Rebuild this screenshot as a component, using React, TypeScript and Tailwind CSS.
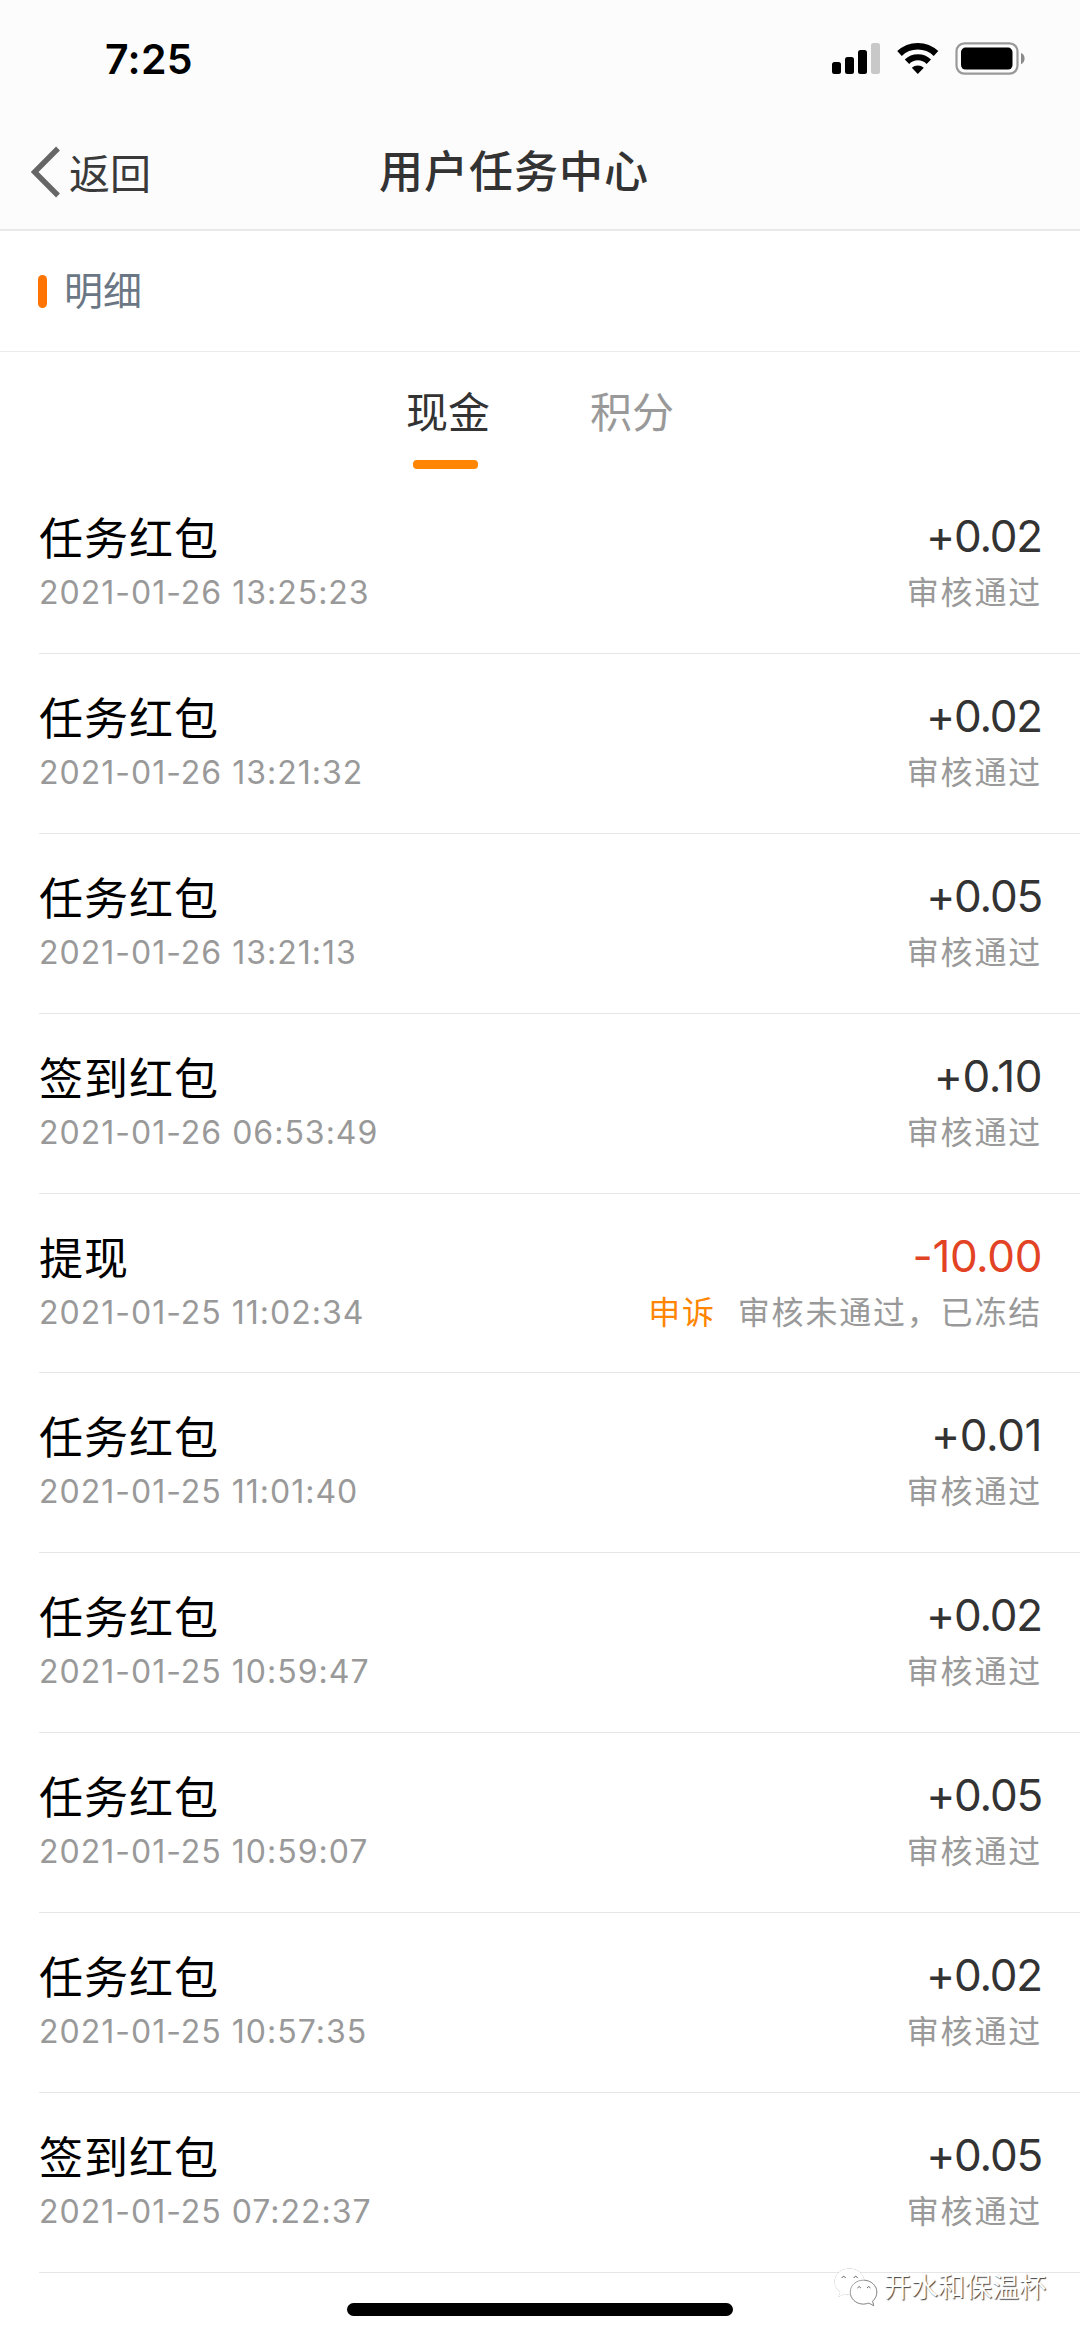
interface TaskRecord {
  title: string
  time: string
  amount: string
  status: string
  rejected?: boolean
}

const records: TaskRecord[] = [
  { title: "任务红包", time: "2021-01-26 13:25:23", amount: "+0.02", status: "审核通过" },
  { title: "任务红包", time: "2021-01-26 13:21:32", amount: "+0.02", status: "审核通过" },
  { title: "任务红包", time: "2021-01-26 13:21:13", amount: "+0.05", status: "审核通过" },
  { title: "签到红包", time: "2021-01-26 06:53:49", amount: "+0.10", status: "审核通过" },
  {
    title: "提现",
    time: "2021-01-25 11:02:34",
    amount: "-10.00",
    status: "审核未通过，已冻结",
    rejected: true,
  },
  { title: "任务红包", time: "2021-01-25 11:01:40", amount: "+0.01", status: "审核通过" },
  { title: "任务红包", time: "2021-01-25 10:59:47", amount: "+0.02", status: "审核通过" },
  { title: "任务红包", time: "2021-01-25 10:59:07", amount: "+0.05", status: "审核通过" },
  { title: "任务红包", time: "2021-01-25 10:57:35", amount: "+0.02", status: "审核通过" },
  { title: "签到红包", time: "2021-01-25 07:22:37", amount: "+0.05", status: "审核通过" },
]

function StatusIcons() {
  return (
    <svg width="196" height="36" viewBox="830 41 196 36" fill="none">
      {/* signal */}
      <rect x="832" y="62" width="9" height="12" rx="2.5" fill="#000" />
      <rect x="845" y="57" width="9" height="17" rx="2.5" fill="#000" />
      <rect x="858" y="50" width="9" height="24" rx="2.5" fill="#000" />
      <rect x="871" y="43" width="9" height="31" rx="2.5" fill="#c8c8c8" />
      {/* wifi */}
      <path d="M899.5 53.5a26.5 26.5 0 0 1 36.5 0" stroke="#000" strokeWidth="6.6" />
      <path d="M907 61.8a15.3 15.3 0 0 1 21.8 0" stroke="#000" strokeWidth="6.2" />
      <path d="M911.8 67.8a9 9 0 0 1 12 0L917.8 74z" fill="#000" />
      {/* battery */}
      <rect x="956.5" y="43.3" width="61" height="30.4" rx="8" stroke="#999" strokeWidth="2.2" />
      <rect x="961" y="47.6" width="51.5" height="22" rx="4.5" fill="#000" />
      <path d="M1021 53c2.2.8 3.6 3 3.6 5.6s-1.4 4.8-3.6 5.6z" fill="#8a8a8a" />
    </svg>
  )
}

function Header() {
  return (
    <header className="h-[231px] border-b-2 border-[#e9e9e9] bg-[#fcfcfc]">
      <div className="flex h-[118px] items-center justify-between pl-[105px] pr-[54px]">
        <span className="text-[41px] leading-none font-semibold tracking-[0.3px] text-black">7:25</span>
        <StatusIcons />
      </div>
      <div className="grid h-[111px] grid-cols-[379px_1fr] items-center">
        <div className="flex items-center pb-[3px] pl-[30px]">
          <svg width="31" height="52" viewBox="0 0 31 52" fill="none">
            <path d="M28 2.500 4.600 26 28 49.500" stroke="#666" strokeWidth="5.400" />
          </svg>
          <span className="ml-[8px] pt-[3px] text-[41px] leading-[56px] text-[#3a3a3a]">返回</span>
        </div>
        <h1 className="pb-[4px] text-[44px] leading-[60px] font-medium tracking-[1px] text-[#333]">
          用户任务中心
        </h1>
      </div>
    </header>
  )
}

function Tabs() {
  return (
    <div className="flex h-[122px] pl-[406px] pt-[31px] text-[42px] leading-[60px]">
      <div className="flex w-[184px] flex-col items-start">
        <span className="text-[#333]">现金</span>
        <span className="ml-[7px] mt-[17px] h-[9px] w-[65px] rounded-[4px] bg-[#ff8502]" />
      </div>
      <span className="text-[#999]">积分</span>
    </div>
  )
}

// "1" is a narrow digit, so amounts holding one need less tightening
function amountTracking(amount: string) {
  return amount.includes("1") ? "tracking-[-0.4px]" : "tracking-[-1.2px]"
}

function RecordRow({ record }: { record: TaskRecord }) {
  return (
    <li className="ml-[39px] flex h-[179.9px] justify-between border-b border-[#e6e6e6] pr-[39px]">
      <div className="pt-[37px]">
        <p className="text-[44px] leading-[56px] tracking-[1px] text-black">{record.title}</p>
        <p className="mt-[2px] text-[32px] leading-[48px] tracking-[1px] text-[#999]">{record.time}</p>
      </div>
      <div className="-mr-[1px] pt-[34px] text-right">
        <p
          className={`text-[44px] leading-[56px] ${amountTracking(record.amount)} ${
            record.rejected ? "text-[#e34325]" : "text-[#333]"
          }`}
        >
          {record.amount}
        </p>
        <p className="mt-[5px] flex justify-end text-[32px] leading-[48px] tracking-[1.8px] text-[#999]">
          {record.rejected && <span className="mr-[22px] text-[#ff8502]">申诉</span>}
          <span>{record.status}</span>
        </p>
      </div>
    </li>
  )
}

function Watermark() {
  return (
    <div className="absolute left-[833px] top-[2266px] flex items-center">
      <svg
        width="46"
        height="44"
        viewBox="0 0 46 44"
        fill="#fff"
        className="overflow-visible [filter:drop-shadow(0_0.8px_0.5px_#888)]"
      >
        <path d="M16.500 2.500C8 2.500 1.500 8.500 1.500 15.800c0 4.300 2.200 7.800 5.700 10.200L5.300 31l6.200-3c1.800.6 3.500.8 5 .8 8.500 0 15-5.800 15-13S25 2.500 16.500 2.500z" />
        <path
          d="M30.300 14.200c-7.400 0-13 5.200-13 11.800s5.600 12 13 12c2 0 3.800-.4 5.400-1l5 2.600-1.200-4.400c2.600-2.200 4.300-5.400 4.300-9.200 0-6.600-6.100-11.800-13.500-11.800z"
          stroke="#777"
          strokeWidth=".7"
        />
        <path
          d="M8.800 12q1.800-3.400 3.800 0M20.800 12q1.800-3.400 3.800 0M24.400 22q1.700-3 3.500 0M34 22q1.700-3 3.500 0"
          fill="none"
          stroke="#666"
          strokeWidth="1"
        />
      </svg>
      <span className="ml-[5px] text-[27px] leading-[40px] text-white [text-shadow:1px_1px_1px_#444]">
        开水和保温杯
      </span>
    </div>
  )
}

export default function App() {
  return (
    <div
      lang="zh-CN"
      className="relative h-[2337px] w-[1080px] overflow-hidden bg-white font-['Inter','Noto_Sans_CJK_SC',sans-serif]"
    >
      <Header />
      <div className="flex h-[121px] items-center border-b border-[#eaeaea] pl-[38px]">
        <span className="h-[33px] w-[9px] rounded-full bg-[#ff7402]" />
        <h2 className="ml-[17px] text-[39px] leading-[54px] text-[#6b7785]">明细</h2>
      </div>
      <Tabs />
      <ul>
        {records.map((record) => (
          <RecordRow key={record.time} record={record} />
        ))}
      </ul>
      <Watermark />
      <div className="absolute left-[347px] top-[2303px] h-[13px] w-[386px] rounded-full bg-black" />
    </div>
  )
}
